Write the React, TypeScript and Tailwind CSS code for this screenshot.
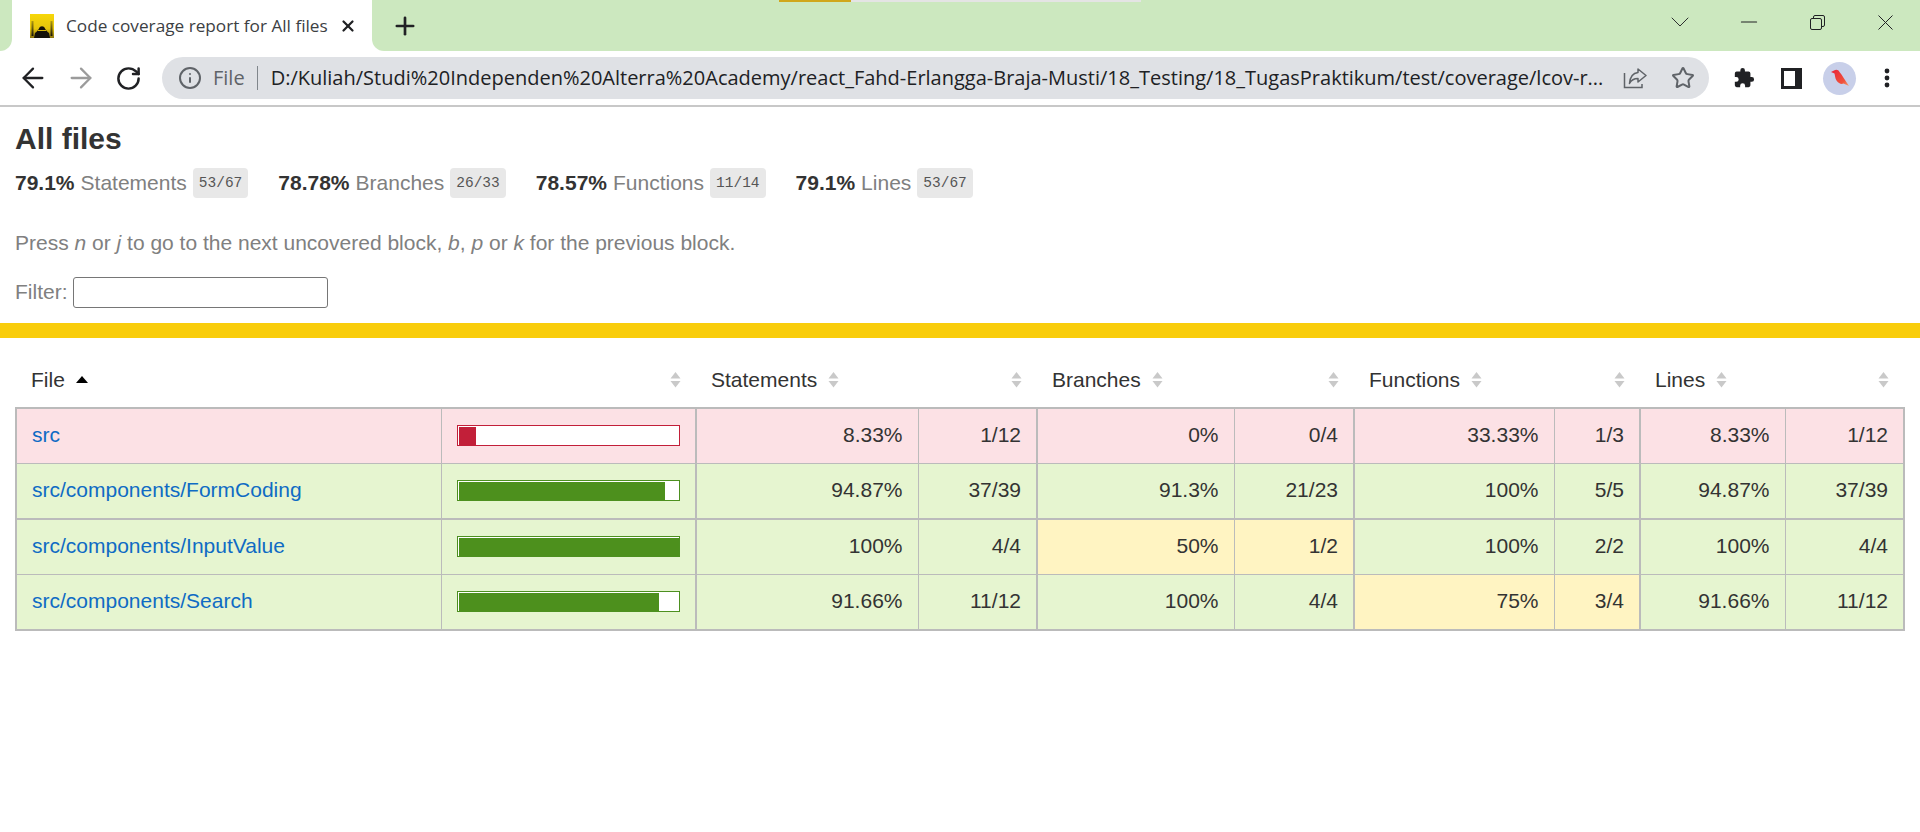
import React from 'react';
import { ArrowLeft, ArrowRight, RotateCw, Info, Star, Plus, X, ChevronDown, Minus } from 'lucide-react';

const PCT = 'px-[15px] pb-[2px] text-right border-l border-[#bbb]';

type Level = 'low' | 'medium' | 'high';

const bgFor: Record<Level, string> = {
  low: 'bg-[#fce1e5]',
  medium: 'bg-[#fff4c2]',
  high: 'bg-[#e6f5d0]',
};

const ROWS: {
  name: string;
  pct: number;
  level: Level;
  cells: { pct: string; abs: string; level: Level }[];
}[] = [
  {
    name: 'src',
    pct: 8.33,
    level: 'low',
    cells: [
      { pct: '8.33%', abs: '1/12', level: 'low' },
      { pct: '0%', abs: '0/4', level: 'low' },
      { pct: '33.33%', abs: '1/3', level: 'low' },
      { pct: '8.33%', abs: '1/12', level: 'low' },
    ],
  },
  {
    name: 'src/components/FormCoding',
    pct: 94.87,
    level: 'high',
    cells: [
      { pct: '94.87%', abs: '37/39', level: 'high' },
      { pct: '91.3%', abs: '21/23', level: 'high' },
      { pct: '100%', abs: '5/5', level: 'high' },
      { pct: '94.87%', abs: '37/39', level: 'high' },
    ],
  },
  {
    name: 'src/components/InputValue',
    pct: 100,
    level: 'high',
    cells: [
      { pct: '100%', abs: '4/4', level: 'high' },
      { pct: '50%', abs: '1/2', level: 'medium' },
      { pct: '100%', abs: '2/2', level: 'high' },
      { pct: '100%', abs: '4/4', level: 'high' },
    ],
  },
  {
    name: 'src/components/Search',
    pct: 91.66,
    level: 'high',
    cells: [
      { pct: '91.66%', abs: '11/12', level: 'high' },
      { pct: '100%', abs: '4/4', level: 'high' },
      { pct: '75%', abs: '3/4', level: 'medium' },
      { pct: '91.66%', abs: '11/12', level: 'high' },
    ],
  },
];

const SUMMARY = [
  { pct: '79.1%', label: 'Statements', frac: '53/67' },
  { pct: '78.78%', label: 'Branches', frac: '26/33' },
  { pct: '78.57%', label: 'Functions', frac: '11/14' },
  { pct: '79.1%', label: 'Lines', frac: '53/67' },
];

const SortIcon = () => (
  <svg width="11" height="16" viewBox="0 0 11 16" className="shrink-0">
    <path d="M5.5 0 L10.5 6.5 H0.5 Z M0.5 9 H10.5 L5.5 15.5 Z" fill="#c9c9c9" />
  </svg>
);

const Favicon = () => (
  <svg width="24" height="24" viewBox="0 0 24 24" className="shrink-0">
    <defs>
      <linearGradient id="fav" x1="0" y1="0" x2="0" y2="1">
        <stop offset="0" stopColor="#f7d708" />
        <stop offset="0.6" stopColor="#e6c60c" />
        <stop offset="1" stopColor="#8a7410" />
      </linearGradient>
      <linearGradient id="minaret" x1="0" y1="0" x2="0" y2="1">
        <stop offset="0" stopColor="#b09a10" />
        <stop offset="1" stopColor="#15120a" />
      </linearGradient>
    </defs>
    <rect width="24" height="24" fill="url(#fav)" />
    <rect x="1.5" y="7" width="2" height="15" fill="url(#minaret)" />
    <rect x="20.5" y="7" width="2" height="15" fill="url(#minaret)" />
    <path
      d="M5 19 C7 17.5 8 16 9 14.5 C10 11.5 14 11.5 15 14.5 C16 16 17 17.5 19 19 L20 24 H4 Z"
      fill="#15120a"
    />
    <path d="M8 16 H16 L16.5 17 H7.5 Z" fill="#d6b60e" />
  </svg>
);

const Tab = () => (
  <div className="flex items-center w-[360px] h-full bg-white rounded-t-[12px] pl-[18px] pr-[15px]">
    <Favicon />
    <span className="ml-[12px] text-[17.2px] text-[#3c4043] whitespace-nowrap">Code coverage report for All files</span>
    <X className="ml-auto w-[18px] h-[18px] text-[#202124]" strokeWidth={3} />
  </div>
);

const TitleBar = () => (
  <div className="relative flex h-[51px] bg-white">
    <div className="w-[12px] bg-[#cce8bf] rounded-br-[12px]" />
    <Tab />
    <div className="flex flex-1 items-start bg-[#cce8bf] rounded-bl-[12px]">
      <Plus className="ml-[19px] mt-[12px] w-[28px] h-[28px] text-[#202124]" strokeWidth={2.3} />
      <div className="ml-auto flex items-center h-[44px] text-[#202124]">
        <ChevronDown className="w-[32px] h-[32px]" strokeWidth={0.7} />
        <Minus className="ml-[40px] w-[26px] h-[26px]" strokeWidth={1} />
        <svg width="15" height="15" viewBox="0 0 15 15" className="ml-[48px]" fill="none" stroke="#202124" strokeWidth="1">
          <rect x="0.5" y="3.5" width="11" height="11" rx="1.5" />
          <path d="M3.5 3.5 V2 a1.5 1.5 0 0 1 1.5 -1.5 H13 a1.5 1.5 0 0 1 1.5 1.5 V10 a1.5 1.5 0 0 1 -1.5 1.5 H11.5" />
        </svg>
        <svg width="15" height="15" viewBox="0 0 15 15" className="ml-[53px] mr-[27px]" stroke="#202124" strokeWidth="1">
          <path d="M0.5 0.5 L14.5 14.5 M14.5 0.5 L0.5 14.5" />
        </svg>
      </div>
    </div>
    <div className="absolute top-0 left-[779px] flex h-[2px]">
      <div className="w-[72px] bg-[#d0a71c]" />
      <div className="w-[290px] bg-[#e4e4e4]" />
    </div>
  </div>
);

const Toolbar = () => (
  <div className="flex items-center h-[56px] bg-white border-b-2 border-[#c8c8c8] pl-[17px]">
    <ArrowLeft className="w-[32px] h-[32px] text-[#202124]" strokeWidth={1.7} />
    <ArrowRight className="ml-[16px] w-[32px] h-[32px] text-[#9b9b9b]" strokeWidth={1.7} />
    <RotateCw className="ml-[18px] w-[27px] h-[27px] text-[#202124]" strokeWidth={2.2} />
    <div className="ml-[20px] flex items-center w-[1547px] h-[42px] rounded-full bg-[#dfe1e5] pl-[16px] pr-[14px]">
      <Info className="w-[24px] h-[24px] text-[#5f6368]" strokeWidth={2} />
      <span className="ml-[11px] text-[20px] text-[#5f6368]">File</span>
      <span className="ml-[12px] w-px h-[24px] bg-[#80868b]" />
      <span className="ml-[13px] text-[20px] text-[#202124] whitespace-nowrap">D:/Kuliah/Studi%20Independen%20Alterra%20Academy/react_Fahd-Erlangga-Braja-Musti/18_Testing/18_TugasPraktikum/test/coverage/lcov-r...</span>
      <svg width="24" height="24" viewBox="0 0 24 24" className="ml-auto" fill="none" stroke="#5f6368" strokeWidth="1.5">
        <path d="M15 3 L23 9.5 L15 16 V12.5 C10 12.5 8 14.5 6.5 17.5 C7 11.5 10 7 15 6.5 Z" strokeLinejoin="round" />
        <path d="M1.5 7 V21.5 H19 V18" />
      </svg>
      <Star className="ml-[24px] w-[24px] h-[24px] text-[#5f6368]" strokeWidth={2} />
    </div>
    <svg width="22" height="22" viewBox="0 0 24 24" className="ml-[24px]" fill="#202124">
      <path d="M20.5 11H19V7a2 2 0 0 0-2-2h-4V3.5a2.5 2.5 0 0 0-5 0V5H4a2 2 0 0 0-2 2v3.8h1.5a2.7 2.7 0 0 1 0 5.4H2V20a2 2 0 0 0 2 2h3.8v-1.5a2.7 2.7 0 0 1 5.4 0V22H17a2 2 0 0 0 2-2v-4h1.5a2.5 2.5 0 0 0 0-5z" />
    </svg>
    <svg width="21" height="21" viewBox="0 0 21 21" className="ml-[26px]">
      <rect width="21" height="21" fill="#202124" />
      <rect x="3" y="3" width="11" height="15" fill="#fff" />
    </svg>
    <div className="ml-[21px] flex items-center justify-center w-[33px] h-[33px] rounded-full bg-[#c8cfe9]">
      <svg width="22" height="20" viewBox="0 0 22 20">
        <defs>
          <linearGradient id="bird" x1="0" y1="0" x2="1" y2="1">
            <stop offset="0" stopColor="#e8243a" />
            <stop offset="0.7" stopColor="#f0503a" />
            <stop offset="1" stopColor="#f4a070" />
          </linearGradient>
        </defs>
        <path d="M2 4 L5 2.5 C7 1 9.5 1.5 10.5 4 C13 7 16 12 20 18 L14.5 15.5 C12.5 16.5 9.5 15.5 7.5 12.5 C6 10 6 7.5 5.5 5.5 Z" fill="url(#bird)" />
      </svg>
    </div>
    <svg width="6" height="20" viewBox="0 0 6 20" className="ml-[28px]" fill="#202124">
      <circle cx="3" cy="3" r="2.4" />
      <circle cx="3" cy="10" r="2.4" />
      <circle cx="3" cy="17" r="2.4" />
    </svg>
  </div>
);

const Bar = ({ pct, low }: { pct: number; low: boolean }) => (
  <div className={`h-[21px] border bg-white ${low ? 'border-[#c21f39]' : 'border-[#4d9020]'}`}>
    <div
      className={`h-[18px] mt-[1px] ml-[1px] ${low ? 'bg-[#c21f39]' : 'bg-[#4d901d]'}`}
      style={{ width: `${Math.floor(pct) * 2.2}px` }}
    />
  </div>
);

const HeaderCell = ({ label }: { label: string }) => (
  <>
    <th className="font-normal text-left pl-[15px] pb-[2px]">
      <div className="flex items-center gap-[11px]">
        {label}
        <SortIcon />
      </div>
    </th>
    <th className="font-normal pr-[15px] pb-[2px]">
      <div className="flex justify-end">
        <SortIcon />
      </div>
    </th>
  </>
);

const Report = () => (
  <div className="flex-1 bg-white font-['Liberation_Sans',Arial,sans-serif] text-[#333]">
    <div className="px-[15px] pt-[17px]">
      <h1 className="text-[30px] font-bold leading-[30px] text-[#333]">All files</h1>
      <div className="flex mt-[13px] h-[32px] items-center text-[21px] gap-[30px]">
        {SUMMARY.map((s, i) => (
          <div key={i} className="flex items-center">
            <span className="font-bold">{s.pct}</span>
            <span className="ml-[6px] text-[#808080]">{s.label}</span>
            <span className="ml-[6px] px-[6px] h-[30px] leading-[31px] rounded-[4px] bg-[#e8e8e8] text-[#555] text-[14.5px] font-['Liberation_Mono',monospace]">{s.frac}</span>
          </div>
        ))}
      </div>
      <p className="mt-[32px] h-[24px] leading-[24px] text-[21px] text-[#808080]">
        Press <em>n</em> or <em>j</em> to go to the next uncovered block, <em>b</em>, <em>p</em> or <em>k</em> for the previous block.
      </p>
      <div className="flex items-center mt-[21px] h-[32px] text-[21px] text-[#808080]">
        Filter:
        <input type="text" className="ml-[5px] w-[255px] h-[31px] border border-[#767676] rounded-[3px] bg-white" />
      </div>
    </div>
    <div className="mt-[15px] h-[15px] bg-[#f9cd0b]" />
    <div className="px-[15px] pt-[16px]">
      <table className="w-[1888px] table-fixed border-collapse text-[21px] text-[#333]">
        <colgroup>
          <col className="w-[425px]" />
          <col className="w-[255px]" />
          <col className="w-[222px]" />
          <col className="w-[119px]" />
          <col className="w-[197px]" />
          <col className="w-[120px]" />
          <col className="w-[200px]" />
          <col className="w-[86px]" />
          <col className="w-[145px]" />
          <col className="w-[119px]" />
        </colgroup>
        <thead>
          <tr className="h-[54px]">
            <th className="font-normal text-left pl-[15px] pb-[2px]">
              <div className="flex items-center gap-[11px]">
                File
                <svg width="12" height="7" viewBox="0 0 12 7">
                  <path d="M6 0 L12 7 H0 Z" fill="#000" />
                </svg>
              </div>
            </th>
            <th className="font-normal pr-[15px] pb-[2px]">
              <div className="flex justify-end">
                <SortIcon />
              </div>
            </th>
            <HeaderCell label="Statements" />
            <HeaderCell label="Branches" />
            <HeaderCell label="Functions" />
            <HeaderCell label="Lines" />
          </tr>
        </thead>
        <tbody className="border-2 border-[#bbb]">
          {ROWS.map((row, idx) => (
            <tr key={row.name} className={`h-[55.5px] border-[#bbb] ${idx === 1 ? 'border-b-2' : 'border-b'}`}>
              <td className={`pl-[15px] pb-[2px] text-[#0f6bc4] whitespace-nowrap ${bgFor[row.level]}`}>{row.name}</td>
              <td className={`px-[15px] pb-[2px] border-l border-[#bbb] ${bgFor[row.level]}`}>
                <Bar pct={row.pct} low={row.level === 'low'} />
              </td>
              {row.cells.map((c, i) => (
                <React.Fragment key={i}>
                  <td className={`${PCT} border-l-2 ${bgFor[c.level]}`}>{c.pct}</td>
                  <td className={`${PCT} ${bgFor[c.level]}`}>{c.abs}</td>
                </React.Fragment>
              ))}
            </tr>
          ))}
        </tbody>
      </table>
    </div>
  </div>
);

const App: React.FC = () => {
  return (
    <div className="flex flex-col w-full h-screen overflow-hidden bg-white font-['Open_Sans',sans-serif]">
      <TitleBar />
      <Toolbar />
      <Report />
    </div>
  );
};

export default App;
